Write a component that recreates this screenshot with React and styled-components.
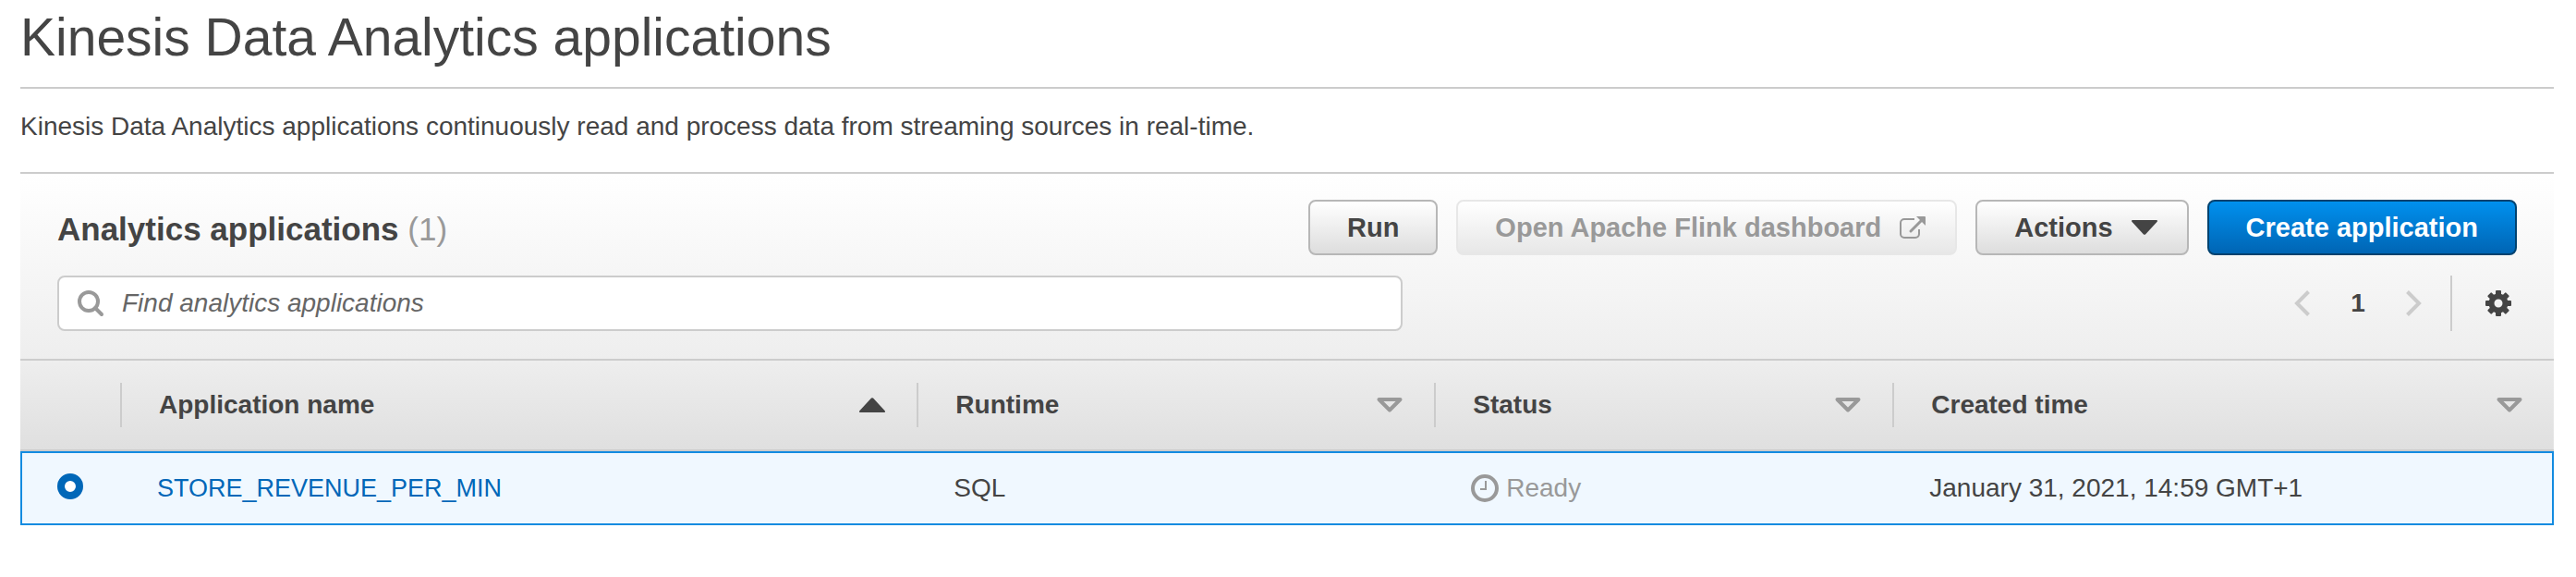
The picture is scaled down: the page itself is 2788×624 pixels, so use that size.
import React from "react";
import styled, { createGlobalStyle, css } from "styled-components";

const GlobalStyle = createGlobalStyle`
  *, *::before, *::after { box-sizing: border-box; }
  body {
    margin: 0;
    background: #fff;
    color: #444;
    font-family: "Liberation Sans", Helvetica, Arial, sans-serif;
    font-size: 28px;
    line-height: 40px;
  }
`;

const Page = styled.main`
  padding: 0 24px 0 22px;
`;

const Title = styled.h1`
  margin: 0;
  padding: 8px 0 22px;
  border-bottom: 2px solid #ccc;
  font-size: 57px;
  font-weight: 400;
  line-height: 64px;
`;

const Description = styled.p`
  margin: 0;
  padding: 21px 0 29px;
`;

const Panel = styled.section`
  border-top: 2px solid #ccc;
  background: linear-gradient(#fff, #eee 200px);
`;

const Toolbar = styled.header`
  display: flex;
  align-items: flex-end;
  justify-content: space-between;
  padding: 28px 40px 0;
`;

const PanelTitle = styled.h2`
  margin: 0;
  font-size: 35px;
  line-height: 56px;
`;

const Count = styled.span`
  color: #999;
  font-weight: 400;
`;

const ButtonGroup = styled.div`
  display: flex;
  gap: 20px;
`;

const variants = {
  normal: css`
    border-color: #b7b7b7;
    background: linear-gradient(#fff, #ddd);
    color: #444;
  `,
  disabled: css`
    border-color: #e7e7e7;
    background: linear-gradient(#fff, #e7e7e7);
    color: #999;
  `,
  primary: css`
    border-color: #00426f;
    background: linear-gradient(#0090ee, #0065b4);
    color: #fff;
  `,
};

const Button = styled.button`
  display: flex;
  align-items: center;
  gap: 20px;
  height: 60px;
  padding: 0 ${({ $trailingIcon }) => ($trailingIcon ? "32px" : "40px")} 0 40px;
  border: 2px solid;
  border-radius: 8px;
  background-clip: padding-box;
  font: inherit;
  font-size: 29px;
  font-weight: 700;
  white-space: nowrap;
  ${({ $variant = "normal" }) => variants[$variant]}
`;

const FilterBar = styled.div`
  display: flex;
  align-items: center;
  justify-content: space-between;
  padding: 22px 40px 30px;
`;

const SearchBox = styled.label`
  display: flex;
  align-items: center;
  gap: 20px;
  width: 54.7%;
  height: 60px;
  padding: 0 20px;
  border: 2px solid #ccc;
  border-radius: 8px;
  background: #fff;
`;

const SearchInput = styled.input`
  flex: 1;
  min-width: 0;
  padding: 0;
  border: 0;
  outline: 0;
  background: none;
  color: #444;
  font: inherit;

  &::placeholder {
    color: #666;
    font-style: italic;
    opacity: 1;
  }
`;

const Pager = styled.nav`
  display: flex;
  align-items: center;
  height: 60px;
`;

const IconButton = styled.button`
  display: flex;
  padding: 0;
  border: 0;
  background: none;
  color: ${({ $muted }) => ($muted ? "#ccc" : "#444")};
`;

const PageNumber = styled.span`
  width: 104px;
  text-align: center;
  font-weight: 700;
`;

const Settings = styled.div`
  display: flex;
  align-items: center;
  height: 60px;
  margin-left: 32px;
  padding: 0 6px 0 36px;
  border-left: 2px solid #ccc;
`;

const Icon = styled.svg`
  display: block;
  flex: none;
  overflow: visible;
`;

const Table = styled.table`
  width: 100%;
  border-collapse: separate;
  border-spacing: 0;
  table-layout: fixed;
  text-align: left;
`;

const HeadRow = styled.tr`
  background: linear-gradient(#eee, #dfdfdf);
`;

const HeadCell = styled.th`
  width: ${({ $width }) => $width};
  padding: 24px 0;
  border-top: 2px solid #ccc;
  border-bottom: 2px solid #ccc;
`;

const HeadInner = styled.div`
  display: flex;
  align-items: center;
  justify-content: space-between;
  height: 48px;
  padding: 0 34px 0 40px;
  border-right: ${({ $last }) => ($last ? "0" : "2px solid #ccc")};
`;

const Row = styled.tr`
  background: #f0f8ff;
`;

const Cell = styled.td`
  padding: 18px 38px;
  border: 0 solid #138be0;
  border-width: 2px 0;
  box-shadow: 0 2px #ccc;

  &:first-child { border-left-width: 2px; }
  &:last-child { border-right-width: 2px; }
`;

const Radio = styled.input`
  display: block;
  appearance: none;
  width: 28px;
  height: 28px;
  margin: 0 0 4px;
  border: 8px solid #0067b8;
  border-radius: 50%;
  background: #fff;
`;

const NameLink = styled.a`
  color: #0067b8;
  font-size: 27px;
  text-decoration: none;
`;

const Status = styled.span`
  display: flex;
  align-items: center;
  gap: 8px;
  color: #999;
`;

const SearchIcon = () => (
  <Icon width="28" height="28" viewBox="0 0 28 28" fill="none" stroke="#999" strokeWidth="4" aria-hidden="true">
    <circle cx="12" cy="12" r="10" />
    <path d="M19 19l7 7" strokeLinecap="round" />
  </Icon>
);

const ExternalIcon = () => (
  <Icon width="28" height="24" viewBox="0 0 28 24" fill="none" stroke="currentColor" strokeWidth="2" aria-hidden="true">
    <path d="M16 3H5a4 4 0 0 0-4 4v12a4 4 0 0 0 4 4h12a4 4 0 0 0 4-4V14" />
    <path d="M12 16L24 4" strokeWidth="3" strokeLinecap="round" />
    <path d="M18 0h9a1 1 0 0 1 1 1v9z" fill="currentColor" stroke="none" />
  </Icon>
);

const CaretDown = () => (
  <Icon width="28" height="16" viewBox="0 0 28 16" fill="currentColor" aria-hidden="true">
    <path d="M1 0h26a1 1 0 0 1 .7 1.700L15 15.400a1.500 1.500 0 0 1-2 0L.3 1.700A1 1 0 0 1 1 0z" />
  </Icon>
);

const SortIcon = ({ active }) => (
  <Icon width="28" height="16" viewBox="0 0 28 16" aria-hidden="true">
    {active ? (
      <path d="M1 16h26a1 1 0 0 0 .7-1.700L15 .6a1.500 1.500 0 0 0-2 0L.3 14.300A1 1 0 0 0 1 16z" fill="#444" />
    ) : (
      <path d="M2.500 2h23L14 13.500z" fill="none" stroke="#999" strokeWidth="4" strokeLinejoin="round" />
    )}
  </Icon>
);

const Chevron = ({ next }) => (
  <Icon width="16" height="28" viewBox="0 0 16 28" fill="none" stroke="currentColor" strokeWidth="4" aria-hidden="true">
    <path d={next ? "M1.500 1.500L14 14L1.500 26.500" : "M14.500 1.500L2 14l12.500 12.500"} />
  </Icon>
);

const GearIcon = () => (
  <Icon width="28" height="28" viewBox="-14 -14 28 28" aria-hidden="true">
    <circle r="7.500" fill="none" stroke="currentColor" strokeWidth="6" />
    {[0, 45, 90, 135, 180, 225, 270, 315].map((a) => (
      <rect key={a} x="-3" y="-14" width="6" height="6" rx="1" fill="currentColor" transform={`rotate(${a})`} />
    ))}
  </Icon>
);

const ClockIcon = () => (
  <Icon width="30" height="30" viewBox="0 0 30 30" fill="none" stroke="currentColor" aria-hidden="true">
    <circle cx="15" cy="15" r="13" strokeWidth="4" />
    <path d="M16 7v9H10" strokeWidth="2" />
  </Icon>
);

const columns = [
  { label: "Application name", width: "31.45%", active: true },
  { label: "Runtime", width: "20.42%" },
  { label: "Status", width: "18.09%" },
  { label: "Created time", width: "auto" },
];

export default function App() {
  return (
    <>
      <GlobalStyle />
      <Page>
        <Title>Kinesis Data Analytics applications</Title>
        <Description>
          Kinesis Data Analytics applications continuously read and process data from streaming sources in real-time.
        </Description>
        <Panel>
          <Toolbar>
            <PanelTitle>
              Analytics applications <Count>(1)</Count>
            </PanelTitle>
            <ButtonGroup>
              <Button type="button">Run</Button>
              <Button type="button" $variant="disabled" $trailingIcon disabled>
                Open Apache Flink dashboard
                <ExternalIcon />
              </Button>
              <Button type="button" $trailingIcon>
                Actions
                <CaretDown />
              </Button>
              <Button type="button" $variant="primary">Create application</Button>
            </ButtonGroup>
          </Toolbar>
          <FilterBar>
            <SearchBox>
              <SearchIcon />
              <SearchInput type="text" aria-label="Find analytics applications" placeholder="Find analytics applications" />
            </SearchBox>
            <Pager aria-label="Pagination">
              <IconButton type="button" $muted aria-label="Previous page" disabled>
                <Chevron />
              </IconButton>
              <PageNumber>1</PageNumber>
              <IconButton type="button" $muted aria-label="Next page" disabled>
                <Chevron next />
              </IconButton>
              <Settings>
                <IconButton type="button" aria-label="Settings">
                  <GearIcon />
                </IconButton>
              </Settings>
            </Pager>
          </FilterBar>
          <Table>
            <thead>
              <HeadRow>
                <HeadCell $width="110px" scope="col" aria-label="Selection">
                  <HeadInner />
                </HeadCell>
                {columns.map((c, i) => (
                  <HeadCell key={c.label} $width={c.width} scope="col">
                    <HeadInner $last={i === columns.length - 1}>
                      {c.label}
                      <SortIcon active={c.active} />
                    </HeadInner>
                  </HeadCell>
                ))}
              </HeadRow>
            </thead>
            <tbody>
              <Row>
                <Cell>
                  <Radio type="radio" name="application" aria-label="STORE_REVENUE_PER_MIN" defaultChecked />
                </Cell>
                <Cell>
                  <NameLink href="#application">STORE_REVENUE_PER_MIN</NameLink>
                </Cell>
                <Cell>SQL</Cell>
                <Cell>
                  <Status>
                    <ClockIcon />
                    Ready
                  </Status>
                </Cell>
                <Cell>January 31, 2021, 14:59 GMT+1</Cell>
              </Row>
            </tbody>
          </Table>
        </Panel>
      </Page>
    </>
  );
}
